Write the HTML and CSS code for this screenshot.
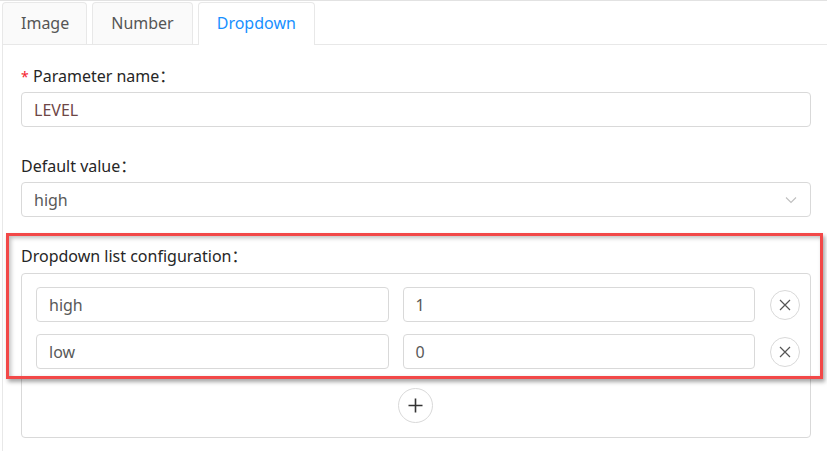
FILE: index.html
```html
<!DOCTYPE html>
<html>
<head>
<meta charset="utf-8">
<link rel="stylesheet" href="styles.css">
</head>
<body>
<div class="page">
  <div class="tabs-nav">
    <div class="tab">Image</div>
    <div class="tab">Number</div>
    <div class="tab active">Dropdown</div>
  </div>
  <div class="panel">
    <div class="form-item">
      <div class="label"><span class="req">*</span>Parameter name：</div>
      <div class="input level">LEVEL</div>
    </div>
    <div class="form-item">
      <div class="label">Default value：</div>
      <div class="input select">
        <span>high</span>
        <svg class="chevron" width="12" height="8" viewBox="0 0 12 8"><path d="M1 1.5 L6 6.5 L11 1.5" fill="none" stroke="#bfbfbf" stroke-width="1.1"/></svg>
      </div>
    </div>
    <div class="form-item">
      <div class="label label-list">Dropdown list configuration：</div>
      <div class="list-box">
        <div class="row">
          <div class="input">high</div>
          <div class="input">1</div>
          <button class="circle">
            <svg width="12" height="12" viewBox="0 0 12 12"><path d="M1 1 L11 11 M11 1 L1 11" stroke="#555" stroke-width="1.2" fill="none"/></svg>
          </button>
        </div>
        <div class="row">
          <div class="input">low</div>
          <div class="input">0</div>
          <button class="circle">
            <svg width="12" height="12" viewBox="0 0 12 12"><path d="M1 1 L11 11 M11 1 L1 11" stroke="#555" stroke-width="1.2" fill="none"/></svg>
          </button>
        </div>
        <div class="add-row">
          <button class="circle add">
            <svg width="15" height="15" viewBox="0 0 15 15"><path d="M7.5 0.5 V14.5 M0.5 7.5 H14.5" stroke="#333" stroke-width="1.6" fill="none"/></svg>
          </button>
        </div>
      </div>
    </div>
  </div>
  <div class="highlight"></div>
</div>
</body>
</html>
```
FILE: styles.css
```css
* { box-sizing: border-box; }
html, body { margin: 0; padding: 0; background: #fff; }
body {
  font-family: "Noto Sans", "Noto Sans CJK SC", sans-serif;
  font-size: 16px;
  color: #262626;
}
.page {
  position: relative;
  height: 451px;
  border-top: 1px solid #e2e2e2;
  padding: 1px 0 0 2px;
  display: flex;
  flex-direction: column;
  overflow: hidden;
}
.tabs-nav {
  display: flex;
  align-items: flex-end;
  border-bottom: 1px solid #e8e8e8;
  height: 43px;
}
.tab {
  height: 42px;
  line-height: 40px;
  padding: 0 18px;
  margin-right: 5px;
  border: 1px solid #e8e8e8;
  border-bottom: none;
  border-radius: 4px 4px 0 0;
  background: #fafafa;
  color: #555;
}
.tab:first-child { padding: 0 17px 0 18px; }
.tab:nth-child(2) { padding: 0 18px 0 18px; }
.tab.active {
  background: #fff;
  color: #1890ff;
  height: 43px;
  margin-bottom: -1px;
}
.panel {
  flex: 1;
  border-left: 1px solid #e8e8e8;
  padding: 19px 16px 0 18px;
}
.form-item { margin-bottom: 27px; }
.label {
  height: 24px;
  line-height: 24px;
  margin-bottom: 4px;
  color: #262626;
}
.label-list { margin-bottom: 5px; }
.req {
  display: inline-block;
  width: 12px;
  color: #f5222d;
  font-size: 14px;
}
.input {
  height: 35px;
  border: 1px solid #d9d9d9;
  border-radius: 4px;
  display: flex;
  align-items: center;
  padding: 0 12px;
  color: #595959;
  background: #fff;
}
.input.level { color: #6e4646; }
.select { justify-content: space-between; padding-right: 13px; }
.chevron { display: block; margin-top: 1px; }
.list-box {
  border: 1px solid #d9d9d9;
  border-radius: 4px;
  padding: 13px 10px 14px 14px;
}
.row {
  display: flex;
  align-items: center;
  gap: 14px;
  margin-bottom: 12px;
}
.row .input { flex: 1; }
.circle {
  width: 30px;
  height: 30px;
  border-radius: 50%;
  border: 1px solid #d9d9d9;
  background: #fff;
  padding: 0;
  display: flex;
  align-items: center;
  justify-content: center;
  margin-left: 1px;
  flex: none;
}
.add-row {
  display: flex;
  justify-content: center;
  padding-top: 7px;
  margin-right: 5px;
}
.circle.add {
  width: 35px;
  height: 35px;
  margin-left: 0;
}
.highlight {
  position: absolute;
  left: 6px;
  top: 232px;
  width: 817px;
  height: 146px;
  border: 3px solid #f24848;
  box-shadow: 2px 3px 4px rgba(0,0,0,0.35), inset 2px 2px 4px rgba(0,0,0,0.25);
  pointer-events: none;
}
```
